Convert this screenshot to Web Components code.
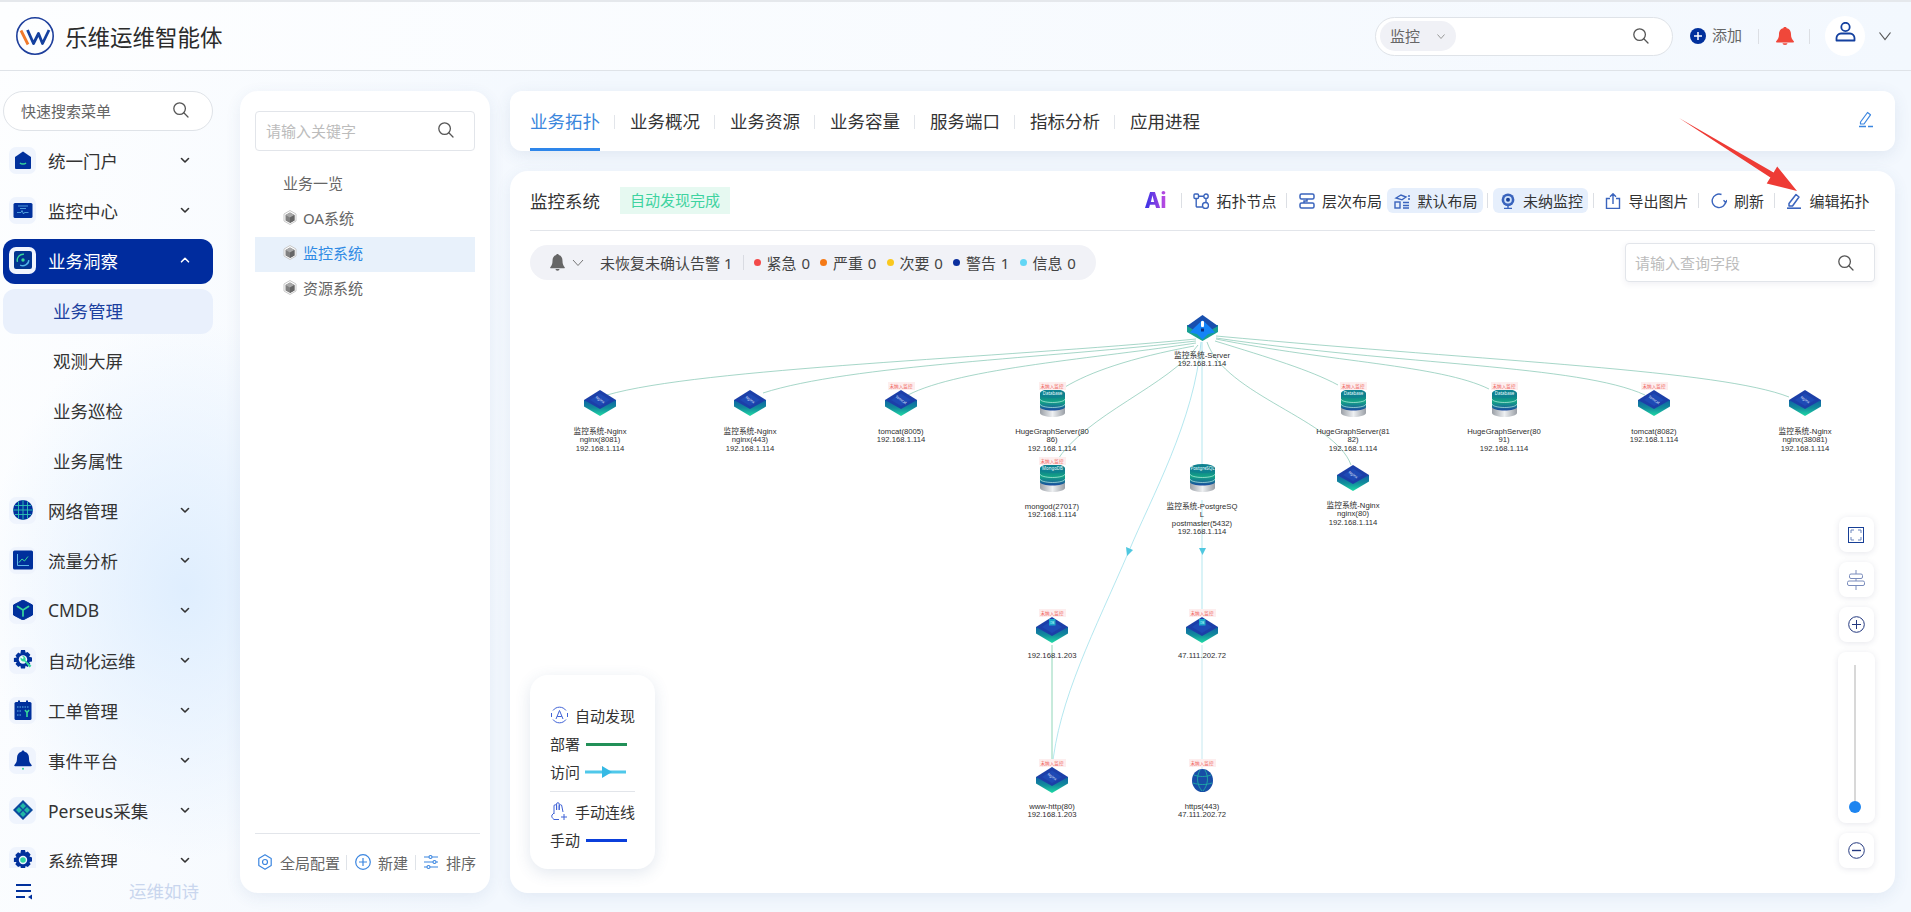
<!doctype html>
<html lang="zh-CN">
<head>
<meta charset="utf-8">
<title>乐维运维智能体</title>
<style>
  html, body { margin: 0; height: 912px; overflow: hidden; }
  body {
    font: 15px "Noto Sans", "Noto Sans CJK SC", sans-serif;
    color: #353535;
    background:
      radial-gradient(ellipse 200px 270px at 185px 590px, #dfeefe 0, rgba(223, 238, 254, 0) 100%),
      linear-gradient(100deg, #fdfeff 0, #f3f8fe 30%, #f3f8fe 100%);
  }
  .shell { display: flex; flex-direction: column; height: 912px; }
  .row { display: flex; flex: 1; min-height: 0; padding: 20px 16px 0 3px; }
  .main { display: flex; flex-direction: column; gap: 20px; flex: 1; min-width: 0; margin-left: 20px; height: 802px; }
</style>
</head>
<body>
<div class="shell">
  <app-header></app-header>
  <div class="row">
    <side-menu>
      <menu-item icon="home">统一门户</menu-item>
      <menu-item icon="monitor">监控中心</menu-item>
      <menu-item icon="insight" active open>业务洞察</menu-item>
      <menu-sub active>业务管理</menu-sub>
      <menu-sub>观测大屏</menu-sub>
      <menu-sub>业务巡检</menu-sub>
      <menu-sub>业务属性</menu-sub>
      <menu-item icon="globe">网络管理</menu-item>
      <menu-item icon="chart">流量分析</menu-item>
      <menu-item icon="cube">CMDB</menu-item>
      <menu-item icon="gear">自动化运维</menu-item>
      <menu-item icon="ticket">工单管理</menu-item>
      <menu-item icon="bell">事件平台</menu-item>
      <menu-item icon="diamond">Perseus采集</menu-item>
      <menu-item icon="system">系统管理</menu-item>
    </side-menu>
    <biz-panel></biz-panel>
    <div class="main">
      <topo-tabs></topo-tabs>
      <topo-card></topo-card>
    </div>
  </div>
</div>
<red-arrow></red-arrow>

<script>
const searchIcon = (c = "#555") => `<svg width="18" height="18" viewBox="0 0 18 18" fill="none" stroke="${c}" stroke-width="1.3"><circle cx="7.6" cy="7.6" r="5.8"/><path d="M11.8 11.8 16 16" stroke-linecap="round"/></svg>`;
const chevron = (c = "#333", up = false) => `<svg width="12" height="12" viewBox="0 0 12 12" fill="none" stroke="${c}" stroke-width="1.6" stroke-linecap="round" stroke-linejoin="round"><path d="${up ? "M2.5 7.8 6 4.3l3.5 3.5" : "M2.5 4.5 6 8l3.5-3.5"}"/></svg>`;

const NAVY = "#00309c";
const GREEN = "#36d79b";
const menuIcons = {
  home: `<path d="M10 1.5 18 7v11a1 1 0 0 1-1 1H3a1 1 0 0 1-1-1V7z" fill="${NAVY}"/><path d="M7 13c1.5 1.4 4.5 1.4 6 0" stroke="${GREEN}" stroke-width="1.5" fill="none"/>`,
  monitor: `<rect x="0.5" y="3" width="19" height="15" rx="1.5" fill="${NAVY}"/><path d="M5 6h10M7 8.5h6M4 12.5h4l1-2 1.5 3.5 1-1.5h4" stroke="#5fb6e8" stroke-width=".8" fill="none"/>`,
  insight: `<rect x="1" y="1" width="18" height="18" rx="2" fill="#02348f"/><path d="M5 7a6 6 0 0 1 10 0" stroke="${GREEN}" stroke-width="1.4" fill="none" transform="rotate(-50 10 10)"/><path d="M15 13a6 6 0 0 1-10 0" stroke="#4fb4e8" stroke-width="1.4" fill="none" transform="rotate(-30 10 10)"/><circle cx="10" cy="10" r="1.7" fill="${GREEN}"/>`,
  globe: `<circle cx="10" cy="10" r="10" fill="${NAVY}"/><path d="M0 10h20M2 5.5h16M2 14.5h16M10 0v20M5.5 1.5v17M14.5 1.5v17" stroke="#2fc4b4" stroke-width=".9" fill="none"/>`,
  chart: `<rect y="0.5" width="20" height="19" rx="1.5" fill="${NAVY}"/><path d="M4.5 4v11.5H16" stroke="#5fb6e8" stroke-width="1" fill="none"/><path d="M6 12.5l3-3.5 2.5 2L15 6.5" stroke="${GREEN}" stroke-width="1" fill="none"/>`,
  cube: `<path d="M10 0 19.5 5v10L10 20 .5 15V5z" fill="${NAVY}" stroke="${NAVY}" stroke-linejoin="round"/><path d="M4.5 6.5 10 10l5.5-3.5M10 10v6" stroke="${GREEN}" stroke-width="1.7" fill="none" stroke-linecap="round"/>`,
  gear: `<path d="M8 0h4l.6 2.8 2-.8 2.8 2.8-1.3 2 2.9.7v4l-2.9.6 1.3 2-2.8 2.9-2-1.3-.6 2.9H8l-.7-2.9-2 1.3-2.8-2.9 1.3-2L.9 12V8l2.9-.6-1.3-2 2.8-2.8 2 1.2z" fill="${NAVY}"/><circle cx="10" cy="9.5" r="4.2" fill="#f3f7ff"/><path d="M7.6 7.6a2.8 2.8 0 0 0 3.6 3.6l5.4 6.2 1.8-1.6-6-5.6a2.8 2.8 0 0 0-3.2-4l1.6 1.7-1.2 1.2z" fill="${GREEN}"/>`,
  ticket: `<rect x="1.5" y="2" width="17" height="18" rx="1.5" fill="${NAVY}"/><path d="M6 .5v3M14 .5v3" stroke="${NAVY}" stroke-width="2"/><path d="M4 7h12M4 11h5M4 15h5" stroke="#5fb6e8" stroke-width="1.1" stroke-dasharray="1.5 1" fill="none"/><path d="M12 10l2 2.4 2-2.4M14 12.4V17" stroke="${GREEN}" stroke-width="1.6" fill="none"/>`,
  bell: `<path d="M10 .5c.9 0 1.4.6 1.5 1.3 3 .7 4.5 3.2 4.5 6.2 0 4 1 5 2.6 7 .4.6 0 1.3-.7 1.3H2.1c-.7 0-1.1-.7-.7-1.3C3 13 4 12 4 8c0-3 1.5-5.5 4.5-6.2C8.6 1.1 9.1.5 10 .5z" fill="${NAVY}"/><circle cx="10" cy="18.8" r="1" fill="${GREEN}"/>`,
  diamond: `<path d="M10 0 20 10 10 20 0 10z" fill="#0b4a9e"/><path d="M10 3 13 6 10 9 7 6zM10 11 13 14 10 17 7 14zM6 7l3 3-3 3-3-3zM14 7l3 3-3 3-3-3z" fill="#1fb8a5"/>`,
  system: `<path d="M8 0h4l.6 2.6 2.2-1 2.8 2.8-1.1 2.2 2.5.8v4l-2.5.7 1.1 2.2-2.8 2.8-2.2-1.1-.6 2.5H8l-.7-2.5-2.2 1.1-2.8-2.8 1.2-2.2L.9 12V8l2.6-.7-1.2-2.2 2.8-2.8 2.2 1.2z" fill="${NAVY}"/><circle cx="10" cy="10" r="3.5" fill="#2fd4a0" stroke="#eaf3ff" stroke-width="1.4"/>`,
};

const toolIcons = {
  nodes: `<g fill="none" stroke="#3a64bd" stroke-width="1.4"><rect x="1" y="1" width="4.5" height="4.5" rx="1"/><circle cx="13" cy="3.2" r="2.2"/><circle cx="12.5" cy="12.5" r="3"/><path d="M3.2 5.5V13a1 1 0 0 0 1 1h5.3M5.5 3.2h5.3M13 5.4v4"/></g>`,
  layers: `<g fill="none" stroke="#3a64bd" stroke-width="1.5"><rect x="1" y="1" width="14" height="5" rx="1.5"/><rect x="1" y="10" width="14" height="5" rx="1.5"/><path d="M8 6v2H5v2"/></g>`,
  layout: `<g fill="none" stroke="#3a64bd" stroke-width="1.4"><path d="M2 5l5-3 5 2-4 2.8z"/><rect x="1" y="9" width="5" height="6"/><path d="M9 9.5h6M9 12.5h6M9 15h6M14 3h2M14 6h2"/></g>`,
  webcam: `<circle cx="8" cy="6.8" r="6.4" fill="#3a64bd"/><circle cx="8" cy="6.8" r="3.8" fill="#cfe2fa"/><circle cx="8" cy="6.8" r="2" fill="#173f96"/><path d="M8 13v2M4 15.4h8" stroke="#3a64bd" stroke-width="1.4"/>`,
  export: `<g fill="none" stroke="#3a64bd" stroke-width="1.4"><path d="M5 5.5H1.5v10h13v-10H11M8 11V1M5 3.8 8 .8l3 3"/></g>`,
  refresh: `<g fill="none" stroke="#3a64bd" stroke-width="1.4"><path d="M10.5 1.5a6.8 6.8 0 1 0 4.3 6.5"/><path d="M12.5 7.2 14.8 9.5 16 7"/></g>`,
  edit: `<g fill="none" stroke="#3a64bd" stroke-width="1.5" stroke-linejoin="round"><path d="M3 10.5 10 1.5l3 2.5-6.5 9H3z"/><path d="M1 15.2h14" stroke-width="1.6"/></g>`,
};

class AppHeader extends HTMLElement {
  connectedCallback() {
    this.attachShadow({ mode: "open" }).innerHTML = `
      <style>
        :host { display: flex; align-items: center; box-sizing: border-box; height: 71px; flex: none;
          padding: 0 19px 0 16px; border-top: 2px solid #e5e8ec; border-bottom: 1px solid #dfe3e8;
          background: linear-gradient(90deg, #fdfeff, #f3f8fe); }
        .logo { width: 38px; height: 38px; flex: none; }
        h1 { margin: 0 0 0 11px; font-size: 22.5px; font-weight: 400; color: #2b2b2b; white-space: nowrap; }
        .search { margin-left: auto; width: 298px; height: 39px; box-sizing: border-box; display: flex; align-items: center;
          background: #fff; border: 1px solid #dfe3e8; border-radius: 20px; padding: 0 22px 0 4px; }
        .select { display: flex; align-items: center; width: 76px; height: 30px; box-sizing: border-box; padding: 0 0 2px 10px;
          border-radius: 15px; background: #f0f1f6; color: #666; }
        .select svg { margin: 2px 0 0 15px; }
        .search > svg { margin-left: auto; }
        .add { display: flex; align-items: center; margin-left: 17px; color: #666; gap: 6px; }
        .add span { padding-bottom: 3px; }
        .sep { width: 1px; height: 15px; background: #dcdfe4; }
        .bell { margin-left: 17px; width: 18px; height: 18px; }
        .avatar { width: 40px; height: 40px; border-radius: 50%; background: #fff; display: flex; justify-content: center; margin-left: 15px; padding-top: 6px; box-sizing: border-box; }
        .down { margin-left: 13px; width: 14px; height: 14px; }
      </style>
      <svg class="logo" viewBox="0 0 38 38" fill="none">
        <circle cx="19" cy="19" r="18.2" stroke="#1e3f9c" stroke-width="1.6"/>
        <path d="M5 13.5 12 27.5" stroke="#f0792b" stroke-width="2.8"/>
        <path d="M11.5 13 17.5 26.5 22.5 16.5 26.5 26.5 33 13" stroke="#14409f" stroke-width="2.8" stroke-linejoin="round"/>
      </svg>
      <h1>乐维运维智能体</h1>
      <div class="search">
        <div class="select">监控<svg width="12" height="12" viewBox="0 0 12 12" fill="none" stroke="#999" stroke-width="1"><path d="M2.5 4.5 6 8.5l3.5-4"/></svg></div>
        ${searchIcon()}
      </div>
      <div class="add">
        <svg width="16" height="16" viewBox="0 0 16 16"><circle cx="8" cy="8" r="8" fill="#00309c"/><path d="M8 4v8M4 8h8" stroke="#fff" stroke-width="1.5"/></svg>
        <span>添加</span>
      </div>
      <div class="sep" style="margin-left:16px"></div>
      <svg class="bell" viewBox="0 0 18 22" preserveAspectRatio="none"><path d="M9 0c1 0 1.6.7 1.7 1.5C14 2.4 15 5.5 15 9c0 4 1 6 2.8 8.300.5.700 0 1.700-.9 1.700H1.100c-.9 0-1.400-1-.9-1.700C2 15 3 13 3 9c0-3.500 1-6.600 4.300-7.500C7.400.7 8 0 9 0z" fill="#f0473a"/><path d="M6.5 20h5a2.5 2 0 0 1-5 0z" fill="#f0473a"/></svg>
      <div class="sep" style="margin-left:15px"></div>
      <div class="avatar">
        <svg width="21" height="20" viewBox="0 0 21 20" fill="none" stroke="#14409f" stroke-width="1.8"><circle cx="10.5" cy="5" r="4.2"/><path d="M1.500 18.500v-2.500a4.500 4.500 0 0 1 4.500-4.500h9a4.500 4.500 0 0 1 4.500 4.500v2.500z" stroke-linejoin="round"/></svg>
      </div>
      <svg class="down" viewBox="0 0 14 14" fill="none" stroke="#555" stroke-width="1.2"><path d="M1.5 3.5 7 10.5l5.5-7"/></svg>
    `;
  }
}

class SideMenu extends HTMLElement {
  connectedCallback() {
    this.attachShadow({ mode: "open" }).innerHTML = `
      <style>
        :host { display: flex; flex-direction: column; width: 217px; flex: none; height: 821px; }
        .search { width: 210px; height: 40px; box-sizing: border-box; flex: none; display: flex; align-items: center; justify-content: space-between;
          padding: 0 22px 2px 17px; border: 1px solid #dfe3e8; border-radius: 20px; background: #fff; color: #666; }
        .items { flex: 1; min-height: 0; overflow: hidden; display: flex; flex-direction: column; gap: 5px; width: 210px; padding-top: 7.5px; box-sizing: border-box; }
        .foot { flex: none; height: 44px; padding-top: 2px; box-sizing: border-box; display: flex; align-items: center; width: 210px; }
        .foot svg { margin-left: 12px; }
        .foot span { margin-left: 96px; padding-bottom: 1px; color: #c9d6ee; font-size: 17.5px; }
      </style>
      <div class="search">快速搜索菜单${searchIcon()}</div>
      <div class="items"><slot></slot></div>
      <div class="foot">
        <svg width="18" height="17" viewBox="0 0 18 17" fill="none" stroke="#00309c" stroke-width="1.8"><path d="M1 2h15M1 8h15M1 14h9"/><path d="M17 11.5v5L13 14z" fill="#00309c" stroke="none"/></svg>
        <span>运维如诗</span>
      </div>
    `;
  }
}

class MenuItem extends HTMLElement {
  connectedCallback() {
    const active = this.hasAttribute("active");
    this.attachShadow({ mode: "open" }).innerHTML = `
      <style>
        :host { display: flex; align-items: center; flex: none; height: 45px; box-sizing: border-box; padding: 0 22px 2px 6px;
          border-radius: 12px; font-size: 17.5px; white-space: nowrap; color: ${active ? "#fff" : "#333"}; background: ${active ? "#002c9e" : "transparent"}; }
        .box { width: 27px; height: 27px; border-radius: 7px; display: flex; align-items: center; justify-content: center; margin-right: 12px;
          background: ${active ? "#f0f4fd" : "#eff4fd"}; }
        .chev { margin-left: auto; display: flex; }
      </style>
      <div class="box"><svg width="20" height="20" viewBox="0 0 20 20">${menuIcons[this.getAttribute("icon")]}</svg></div>
      <slot></slot>
      <div class="chev">${chevron(active ? "#fff" : "#333", this.hasAttribute("open"))}</div>
    `;
  }
}

class MenuSub extends HTMLElement {
  connectedCallback() {
    const active = this.hasAttribute("active");
    this.attachShadow({ mode: "open" }).innerHTML = `
      <style>
        :host { display: flex; align-items: center; flex: none; height: 45px; padding: 0 0 2px 50px; box-sizing: border-box;
          border-radius: 12px; font-size: 17.5px; color: ${active ? "#1b3f9f" : "#333"}; background: ${active ? "#e9f0fc" : "transparent"}; }
      </style>
      <slot></slot>
    `;
  }
}

const hexIcon = `<svg width="14" height="15" viewBox="0 0 14 15"><path d="M7 .5 13 4v7l-6 3.5L1 11V4z" fill="#fff" stroke="#c8c8c8"/><path d="M7 2.5 11.5 5v5.5L7 13 2.5 10.5V5z" fill="#808080"/><path d="M7 7.5 11.5 5 7 2.5 2.5 5z" fill="#a8a8a8"/><path d="M7 7.5V13l4.5-2.5V5z" fill="#666"/></svg>`;

class BizPanel extends HTMLElement {
  connectedCallback() {
    this.attachShadow({ mode: "open" }).innerHTML = `
      <style>
        :host { display: flex; flex-direction: column; flex: none; box-sizing: border-box; width: 250px; height: 802px; margin-left: 20px;
          padding: 20px 15px 0; background: #fff; border-radius: 18px; box-shadow: 0 4px 16px rgba(60, 90, 140, .09); }
        .search { height: 40px; box-sizing: border-box; flex: none; display: flex; align-items: center; justify-content: space-between;
          padding: 0 19px 2px 10px; border: 1px solid #e2e5ea; border-radius: 4px; color: #bcbcbc; }
        .tree { flex: 1; margin-top: 15.5px; color: #666; }
        .row { display: flex; align-items: center; gap: 6px; height: 35px; box-sizing: border-box; padding: 0 0 3px 28px; }
        .row.on { background: #e8f1fb; color: #2f8ae4; }
        .foot { flex: none; height: 60px; box-sizing: border-box; display: flex; align-items: center; margin-right: -5px; border-top: 1px solid #e2e5ea; padding: 0 0 3px 2px; color: #666; white-space: nowrap; }
        .foot svg { flex: none; margin-right: 7px; }
        .sep { width: 1px; height: 15px; background: #dfe3e8; margin: 0 8px 0 6px; }
      </style>
      <div class="search">请输入关键字${searchIcon()}</div>
      <div class="tree">
        <div class="row">业务一览</div>
        <div class="row">${hexIcon}OA系统</div>
        <div class="row on">${hexIcon}监控系统</div>
        <div class="row">${hexIcon}资源系统</div>
      </div>
      <div class="foot">
        <svg width="16" height="16" viewBox="0 0 16 16" fill="none" stroke="#3b86e0" stroke-width="1.2"><path d="M8 .8 14.2 4.4v7.2L8 15.2 1.800 11.600V4.400z" stroke-linejoin="round"/><circle cx="8" cy="8" r="2.5"/></svg>全局配置
        <div class="sep"></div>
        <svg width="16" height="16" viewBox="0 0 16 16" fill="none" stroke="#3b86e0" stroke-width="1.2"><circle cx="8" cy="8" r="7.3"/><path d="M8 4v8M4 8h8"/></svg>新建
        <div class="sep" style="margin-left:7px;margin-right:7px"></div>
        <svg width="16" height="16" viewBox="0 0 16 16" fill="none" stroke="#3b86e0" stroke-width="1.1"><path d="M1 3h5M9 3h6M1 8h9M13 8h2M1 13h3M7 13h8"/><circle cx="7.5" cy="3" r="1.5"/><circle cx="11.5" cy="8" r="1.5"/><circle cx="5.5" cy="13" r="1.5"/></svg>排序
      </div>
    `;
  }
}

class TopoTabs extends HTMLElement {
  connectedCallback() {
    const tabs = ["业务拓扑", "业务概况", "业务资源", "业务容量", "服务端口", "指标分析", "应用进程"];
    this.attachShadow({ mode: "open" }).innerHTML = `
      <style>
        :host { display: flex; flex: none; align-items: stretch; box-sizing: border-box; height: 60px; padding: 0 20px; background: #fff;
          border-radius: 12px; box-shadow: 0 4px 16px rgba(60, 90, 140, .1); font-size: 17.5px; color: #333; }
        .tab { display: flex; align-items: center; width: 70px; padding-top: 2px; box-sizing: border-box; white-space: nowrap; border-bottom: 3px solid transparent; }
        .tab.on { color: #3a86dc; border-bottom-color: #2e86ea; }
        .sep { align-self: center; width: 1px; height: 14px; background: #e2e5ea; margin: 2px 15px 0 14px; }
        svg { margin-left: auto; align-self: center; margin-top: -4px; margin-right: 1px; }
      </style>
      ${tabs.map((t, i) => `${i ? '<div class="sep"></div>' : ""}<div class="tab${i ? "" : " on"}">${t}</div>`).join("")}
      <svg width="16" height="17" viewBox="0 0 16 17" fill="none" stroke="#3b86e0" stroke-width="1.2" stroke-linejoin="round"><path d="M2.5 11 9.5 1.5l3 2.3-6.5 9.2H2.5z"/><path d="M1 15.5h7M10 15.5h5" stroke-width="1.4"/></svg>
    `;
  }
}

class ToolButton extends HTMLElement {
  connectedCallback() {
    const active = this.hasAttribute("active");
    this.attachShadow({ mode: "open" }).innerHTML = `
      <style>
        :host { display: flex; align-items: center; gap: 7px; height: 25px; box-sizing: border-box; padding: 0 5.5px 0 7px; border-radius: 6px;
          white-space: nowrap; color: #333; background: ${active ? "#e6effc" : "transparent"}; }
        svg { flex: none; }
      </style>
      <svg width="16" height="16" viewBox="0 0 16 16">${toolIcons[this.getAttribute("icon")]}</svg><slot></slot>
    `;
  }
}

class AlertBar extends HTMLElement {
  connectedCallback() {
    const levels = [["紧急 0", "#f34a4a"], ["严重 0", "#f57a16"], ["次要 0", "#fac81e"], ["警告 1", "#0b2f9e"], ["信息 0", "#62d6f5"]];
    this.attachShadow({ mode: "open" }).innerHTML = `
      <style>
        :host { display: flex; align-items: center; box-sizing: border-box; height: 35px; padding: 0 20px; background: #f1f2f7; border-radius: 18px; white-space: nowrap; color: #444; }
        .bell { margin-right: 7px; }
        .chev { margin-right: 16px; }
        .sep { width: 1px; height: 15px; background: #d9dbe2; margin: 0 9.5px 0 11px; }
        .lv { display: flex; align-items: center; gap: 5.5px; margin-right: 10.5px; word-spacing: 1px; }
        .lv:last-child { margin-right: 0; }
        i { width: 7px; height: 7px; border-radius: 50%; }
      </style>
      <svg class="bell" width="15" height="17" viewBox="0 0 15 17"><path d="M7.5 0c.8 0 1.2.5 1.3 1.100C11.500 1.900 12.500 4 12.500 7c0 3 .8 4.500 2.200 6.300.3.400 0 1-.6 1H.9c-.6 0-.9-.6-.6-1C1.700 11.500 2.500 10 2.500 7c0-3 1-5.100 3.700-5.900C6.300.5 6.700 0 7.500 0z" fill="#666"/><path d="M5.5 15h4a2 1.8 0 0 1-4 0z" fill="#666"/></svg>
      <svg class="chev" width="12" height="8" viewBox="0 0 12 8" fill="none" stroke="#777" stroke-width="1"><path d="M1 1l5 5.5L11 1"/></svg>
      未恢复未确认告警 1
      <div class="sep"></div>
      ${levels.map(([t, c]) => `<div class="lv"><i style="background:${c}"></i>${t}</div>`).join("")}
    `;
  }
}

const cubeSvg = (label, host) => `
  <svg width="32" height="26" viewBox="0 0 32 26">
    <defs><linearGradient id="s" x1="0" y1="0" x2="0" y2="1"><stop offset="0" stop-color="#0f62a6"/><stop offset=".5" stop-color="#128c9c"/><stop offset="1" stop-color="#1fdca5"/></linearGradient></defs>
    <path d="M0 10v6.500L16 26l16-9.500V10z" fill="url(#s)"/>
    <path d="M16 0 32 10 16 19 0 10z" fill="#1c3fa8"/>
    <path d="M16 3.500 26 10 16 16 6 10z" fill="#1e4ab5"/>
    ${host ? `<rect x="13" y="2" width="6.5" height="6.5" fill="#1aa6c8"/><text x="16.2" y="6.5" font-size="3" fill="#bff" text-anchor="middle">DB</text>` : `<text x="16" y="11" font-size="3.6" fill="#e6f0ff" text-anchor="middle" transform="rotate(35 16 10)">${label}</text>`}
  </svg>`;
const cylSvg = (label) => `
  <svg width="27" height="28" viewBox="0 0 27 28">
    <defs>
      <linearGradient id="b" x1="0" y1="0" x2="0" y2="1"><stop offset="0" stop-color="#0d6f8f"/><stop offset=".5" stop-color="#14a585"/><stop offset="1" stop-color="#1a4aa0"/></linearGradient>
      <linearGradient id="g" x1="0" y1="0" x2="1" y2="0"><stop offset="0" stop-color="#9a9fa6"/><stop offset=".5" stop-color="#eef0f2"/><stop offset="1" stop-color="#9a9fa6"/></linearGradient>
    </defs>
    <path d="M1 17v7c0 2.200 6 4 12.500 4S26 26.200 26 24v-7z" fill="url(#g)"/>
    <path d="M1 4v14c0 2 6 3.500 12.500 3.500S26 20 26 18V4z" fill="url(#b)"/>
    <path d="M1 10c0 2 6 3.500 12.500 3.500S26 12 26 10M1 15c0 2 6 3.500 12.500 3.500S26 17 26 15" stroke="#d8fff2" stroke-width=".6" fill="none"/>
    <ellipse cx="13.5" cy="4.5" rx="12.500" ry="4.500" fill="#0f8290"/>
    <text x="13.5" y="6" font-size="4.4" fill="#eafcff" text-anchor="middle">${label}</text>
  </svg>`;
const serverSvg = `
  <svg width="31" height="26" viewBox="0 0 31 26">
    <path d="M0 10v7l15.5 9L31 17v-7z" fill="#17a092"/>
    <path d="M15.5 0 31 11 15.5 20 0 11z" fill="#184fae"/>
    <path d="M15.5 5 25 14l3 3.5-7 1.5-5.500 5.500L10 19l-7-1.500L6 14z" fill="#1484f7"/>
    <rect x="14" y="6" width="3" height="6" rx="1" fill="#fff"/><rect x="14" y="13.5" width="3" height="3" fill="#0a2f80"/>
  </svg>`;
const globeSvg = `
  <svg width="21" height="23" viewBox="0 0 21 23">
    <ellipse cx="10.5" cy="11.5" rx="10.5" ry="11.5" fill="#174ea6"/>
    <path d="M2 6c5 2 12 2 17 0M1 14c6 2 13 2 19 0M8 1C4 8 5 16 10 22M13 1c4 7 3 15-2 21" stroke="#1fb6a6" stroke-width=".8" fill="none"/>
  </svg>`;

class TopoNode extends HTMLElement {
  connectedCallback() {
    const kind = this.getAttribute("kind");
    const label = this.getAttribute("name") || "";
    const lines = this.getAttribute("lines").split("|");
    const x = +this.getAttribute("x") - 510;
    const y = +this.getAttribute("y") - 290;
    const shapes = { cube: [cubeSvg(label), 26], host: [cubeSvg(label, true), 26], cyl: [cylSvg(label), 28], server: [serverSvg, 26], globe: [globeSvg, 23] };
    const [svg, h] = shapes[kind];
    const offset = +(this.getAttribute("offset") || 29);
    this.style.left = x - 50 + "px";
    this.style.top = y - h / 2 + "px";
    this.attachShadow({ mode: "open" }).innerHTML = `
      <style>
        :host { position: absolute; display: flex; flex-direction: column; align-items: center; width: 100px; }
        .icon { height: ${h}px; display: flex; }
        .tag { position: absolute; left: 36.5px; top: ${h / 2 - 21}px; width: 27px; height: 8px; background: #fdeeee; color: #ef5b5b; font-size: 4.6px; line-height: 8px; text-align: center; white-space: nowrap; overflow: hidden; }
        .label { margin-top: ${offset - h / 2 - 4.25}px; font: 7.7px/8.5px "Liberation Sans", "Noto Sans CJK SC", sans-serif; text-align: center; white-space: nowrap; color: #2e2e2e; }
      </style>
      <div class="icon">${svg}</div>
      ${this.hasAttribute("tag") ? '<div class="tag">未纳入监控</div>' : ""}
      <div class="label">${lines.join("<br>")}</div>
    `;
  }
}

class TopoCanvas extends HTMLElement {
  connectedCallback() {
    const deploy = [
      "M1196 339C1000 358 700 368 607 395",
      "M1196 341C1050 358 850 365 763 393",
      "M1196 343C1100 358 960 368 908 395",
      "M1194 346C1130 358 1090 372 1065 387",
      "M1198 345C1170 385 1085 415 1056 462",
      "M1207 342C1225 395 1335 420 1351 465",
      "M1215 341C1270 358 1310 370 1338 385",
      "M1216 339C1330 362 1440 365 1489 389",
      "M1216 338C1400 365 1580 365 1645 395",
      "M1216 336C1500 362 1720 370 1789 397",
    ];
    const visit = [
      "M1201 342C1195 420 1150 500 1129 551C1095 630 1058 700 1052 770",
      "M1202 342V465",
      "M1202 500V615",
    ];
    this.attachShadow({ mode: "open" }).innerHTML = `
      <style>
        :host { display: block; position: relative; flex: 1; min-height: 0; margin: 8px -20px 0; }
        svg.edges { position: absolute; left: 0; top: 0; }
      </style>
      <svg class="edges" width="1385" height="603" viewBox="510 290 1385 603" fill="none">
        <g stroke="#80c4b0" stroke-width=".7">${deploy.map((d) => `<path d="${d}"/>`).join("")}</g>
        <g stroke="#94dce8" stroke-width=".7">${visit.map((d) => `<path d="${d}"/>`).join("")}</g>
        <path d="M1052 645V770" stroke="#8fd6b8" stroke-width="1"/>
        <path d="M1202 645V770" stroke="#c6e9f0" stroke-width="1"/>
        <path d="M1126 547 1133 550 1127 556z" fill="#4fc8e0"/>
        <path d="M1199 548h7L1202.5 555z" fill="#4fc8e0"/>
      </svg>
      <slot></slot>
    `;
  }
}

class TopoLegend extends HTMLElement {
  connectedCallback() {
    this.attachShadow({ mode: "open" }).innerHTML = `
      <style>
        :host { position: absolute; left: 20px; bottom: 24px; width: 125px; height: 194px; box-sizing: border-box; padding: 27px 20px 0; background: #fff;
          border-radius: 18px; box-shadow: 0 4px 16px rgba(60, 90, 140, .14); white-space: nowrap; color: #333; }
        .row { display: flex; align-items: center; height: 28px; box-sizing: border-box; padding-bottom: 2px; }
        .row svg { flex: none; }
        .line { width: 41px; height: 3px; margin: 2px 0 0 6px; }
        hr { border: 0; height: 1px; background: #e2e5ea; margin: 5px 0 6px; }
      </style>
      <div class="row">
        <svg width="19" height="18" viewBox="0 0 19 18" fill="none" stroke="#3f62d6" stroke-width="1" style="margin-right:6px"><path d="M3 4.5A8 8 0 0 1 16 4.5M16 13.5A8 8 0 0 1 3 13.5M1.5 7v4M17.5 7v4"/><path d="M6 13 9.5 4.5 13 13M7.2 10.5h4.600"/></svg>自动发现
      </div>
      <div class="row">部署<div class="line" style="background:#229058"></div></div>
      <div class="row">访问
        <svg width="41" height="12" viewBox="0 0 41 12" style="margin:2px 0 0 5px"><rect y="4.5" width="41" height="3" fill="#4fc8ea"/><path d="M17 0l10 6-10 6z" fill="#36b9e4"/></svg>
      </div>
      <hr>
      <div class="row">
        <svg width="19" height="18" viewBox="0 0 19 18" fill="none" stroke="#3f62d6" stroke-width="1" style="margin-right:6px"><path d="M4 12V4a1.3 1.3 0 0 1 2.6 0v4-6a1.3 1.3 0 0 1 2.6 0v6-4a1.3 1.3 0 0 1 2.6 0l1.2 6M4 11 2 13c-.7 1.5 0 3 2 4.5h5"/><path d="M14 12v6M11 15h6"/></svg>手动连线
      </div>
      <div class="row">手动<div class="line" style="background:#0b3fdb"></div></div>
    `;
  }
}

class ZoomControls extends HTMLElement {
  connectedCallback() {
    this.attachShadow({ mode: "open" }).innerHTML = `
      <style>
        :host { position: absolute; right: 20.5px; bottom: 25px; display: flex; flex-direction: column; align-items: center; gap: 10px; }
        .btn { width: 35px; height: 35px; border-radius: 8px; background: #fff; box-shadow: 0 1px 6px rgba(60, 70, 110, .13); display: flex; align-items: center; justify-content: center; }
        .slider { position: relative; width: 37px; height: 171px; border-radius: 8px; background: #fff; box-shadow: 0 1px 6px rgba(60, 70, 110, .13); }
        .track { position: absolute; left: 16.5px; top: 13px; width: 2px; height: 144px; background: #d8d8d8; }
        .thumb { position: absolute; left: 11.5px; top: 149px; width: 12px; height: 12px; border-radius: 50%; background: #1e85f0; }
      </style>
      <div class="btn"><svg width="16" height="16" viewBox="0 0 16 16" fill="none"><rect x=".5" y=".5" width="15" height="15" stroke="#173f96"/><path d="M3 6V3h3M10 3h3v3M13 10v3h-3M6 13H3v-3" stroke="#6d86bd"/></svg></div>
      <div class="btn"><svg width="18" height="20" viewBox="0 0 18 20" fill="none" stroke="#7a8cbc"><rect x="2.5" y="4" width="13" height="4.5" rx="1.5"/><rect x=".5" y="11" width="17" height="4.5" rx="1.5"/><path d="M9 0v4M9 8.5V11M9 15.5V20"/></svg></div>
      <div class="btn"><svg width="17" height="17" viewBox="0 0 17 17" fill="none" stroke="#24397f" stroke-width="1"><circle cx="8.5" cy="8.5" r="7.8"/><path d="M8.5 4v9M4 8.5h9"/></svg></div>
      <div class="slider"><div class="track"></div><div class="thumb"></div></div>
      <div class="btn"><svg width="17" height="17" viewBox="0 0 17 17" fill="none" stroke="#24397f" stroke-width="1"><circle cx="8.5" cy="8.5" r="7.8"/><path d="M4 8.5h9" stroke-width="1.4"/></svg></div>
    `;
  }
}

class TopoCard extends HTMLElement {
  connectedCallback() {
    this.attachShadow({ mode: "open" }).innerHTML = `
      <style>
        :host { display: flex; flex-direction: column; flex: 1; min-height: 0; box-sizing: border-box; padding: 0 20px; background: #fff;
          border-radius: 18px; box-shadow: 0 4px 16px rgba(60, 90, 140, .09); }
        .top { display: flex; align-items: center; flex: none; height: 60px; box-sizing: border-box; border-bottom: 1px solid #e2e5ea; white-space: nowrap; }
        .title { font-size: 17.5px; color: #333; }
        .tag { margin-left: 20px; padding: 0 10px; height: 27px; line-height: 27px; background: #e6f9f1; color: #3ed3a0; }
        .tools { margin-left: auto; display: flex; align-items: center; }
        .ai { font: 800 21px Inter, sans-serif; width: 22px; background: linear-gradient(90deg, #3030e6, #c04be0); -webkit-background-clip: text; background-clip: text; color: transparent; margin-right: 10px; }
        .sep { width: 1px; height: 15px; background: #dcdfe4; margin: 0 4.5px; }
        .bar { display: flex; align-items: center; justify-content: space-between; flex: none; height: 39px; margin-top: 12px; }
        .query { width: 250px; height: 39px; box-sizing: border-box; display: flex; align-items: center; justify-content: space-between; padding: 0 19px 0 9px;
          border: 1px solid #e2e5ea; border-radius: 4px; background: #fff; color: #bcbcbc; box-shadow: 0 2px 6px rgba(60, 70, 110, .08); white-space: nowrap; }
      </style>
      <div class="top">
        <div class="title">监控系统</div>
        <div class="tag">自动发现完成</div>
        <div class="tools">
          <span class="ai">Ai</span>
          <div class="sep"></div>
          <tool-button icon="nodes">拓扑节点</tool-button>
          <div class="sep"></div>
          <tool-button icon="layers">层次布局</tool-button>
          <tool-button icon="layout" active>默认布局</tool-button>
          <div class="sep"></div>
          <tool-button icon="webcam" active>未纳监控</tool-button>
          <div class="sep"></div>
          <tool-button icon="export">导出图片</tool-button>
          <div class="sep"></div>
          <tool-button icon="refresh">刷新</tool-button>
          <div class="sep"></div>
          <tool-button icon="edit">编辑拓扑</tool-button>
        </div>
      </div>
      <div class="bar">
        <alert-bar></alert-bar>
        <div class="query">请输入查询字段${searchIcon()}</div>
      </div>
      <topo-canvas>
        <topo-node kind="server" x="1202" y="328" offset="28" lines="监控系统-Server|192.168.1.114"></topo-node>
        <topo-node kind="cube" name="Nginx" x="600" y="403" lines="监控系统-Nginx|nginx(8081)|192.168.1.114"></topo-node>
        <topo-node kind="cube" name="Nginx" x="750" y="403" lines="监控系统-Nginx|nginx(443)|192.168.1.114"></topo-node>
        <topo-node kind="cube" name="Tomcat" x="901" y="403" tag lines="tomcat(8005)|192.168.1.114"></topo-node>
        <topo-node kind="cyl" name="Database" x="1052" y="403" tag lines="HugeGraphServer(80|86)|192.168.1.114"></topo-node>
        <topo-node kind="cyl" name="Database" x="1353" y="403" tag lines="HugeGraphServer(81|82)|192.168.1.114"></topo-node>
        <topo-node kind="cyl" name="Database" x="1504" y="403" tag lines="HugeGraphServer(80|91)|192.168.1.114"></topo-node>
        <topo-node kind="cube" name="Tomcat" x="1654" y="403" tag lines="tomcat(8082)|192.168.1.114"></topo-node>
        <topo-node kind="cube" name="Nginx" x="1805" y="403" lines="监控系统-Nginx|nginx(38081)|192.168.1.114"></topo-node>
        <topo-node kind="cyl" name="MongoDB" x="1052" y="478" tag offset="29" lines="mongod(27017)|192.168.1.114"></topo-node>
        <topo-node kind="cyl" name="PostgreSQL" x="1202" y="478" offset="29" lines="监控系统-PostgreSQ|L|postmaster(5432)|192.168.1.114"></topo-node>
        <topo-node kind="cube" name="Nginx" x="1353" y="478" offset="28" lines="监控系统-Nginx|nginx(80)|192.168.1.114"></topo-node>
        <topo-node kind="host" x="1052" y="630" tag offset="26" lines="192.168.1.203"></topo-node>
        <topo-node kind="host" x="1202" y="630" tag offset="26" lines="47.111.202.72"></topo-node>
        <topo-node kind="cube" name="Nginx" x="1052" y="780" tag offset="27" lines="www-http(80)|192.168.1.203"></topo-node>
        <topo-node kind="globe" x="1202" y="780" tag offset="27" lines="https(443)|47.111.202.72"></topo-node>
        <topo-legend></topo-legend>
        <zoom-controls></zoom-controls>
      </topo-canvas>
    `;
  }
}

class RedArrow extends HTMLElement {
  connectedCallback() {
    this.attachShadow({ mode: "open" }).innerHTML = `
      <style>:host { position: absolute; left: 1675px; top: 115px; display: block; }</style>
      <svg width="125" height="80" viewBox="1675 115 125 80"><path d="M1679 118 1773.6 172.4 1777.2 166.5 1797 191 1766.7 183.5 1770.4 177.6z" fill="#ee3b35"/></svg>
    `;
  }
}

customElements.define("tool-button", ToolButton);
customElements.define("alert-bar", AlertBar);
customElements.define("topo-node", TopoNode);
customElements.define("topo-legend", TopoLegend);
customElements.define("zoom-controls", ZoomControls);
customElements.define("topo-canvas", TopoCanvas);
customElements.define("topo-card", TopoCard);
customElements.define("topo-tabs", TopoTabs);
customElements.define("biz-panel", BizPanel);
customElements.define("menu-item", MenuItem);
customElements.define("menu-sub", MenuSub);
customElements.define("side-menu", SideMenu);
customElements.define("app-header", AppHeader);
customElements.define("red-arrow", RedArrow);
</script>
</body>
</html>
